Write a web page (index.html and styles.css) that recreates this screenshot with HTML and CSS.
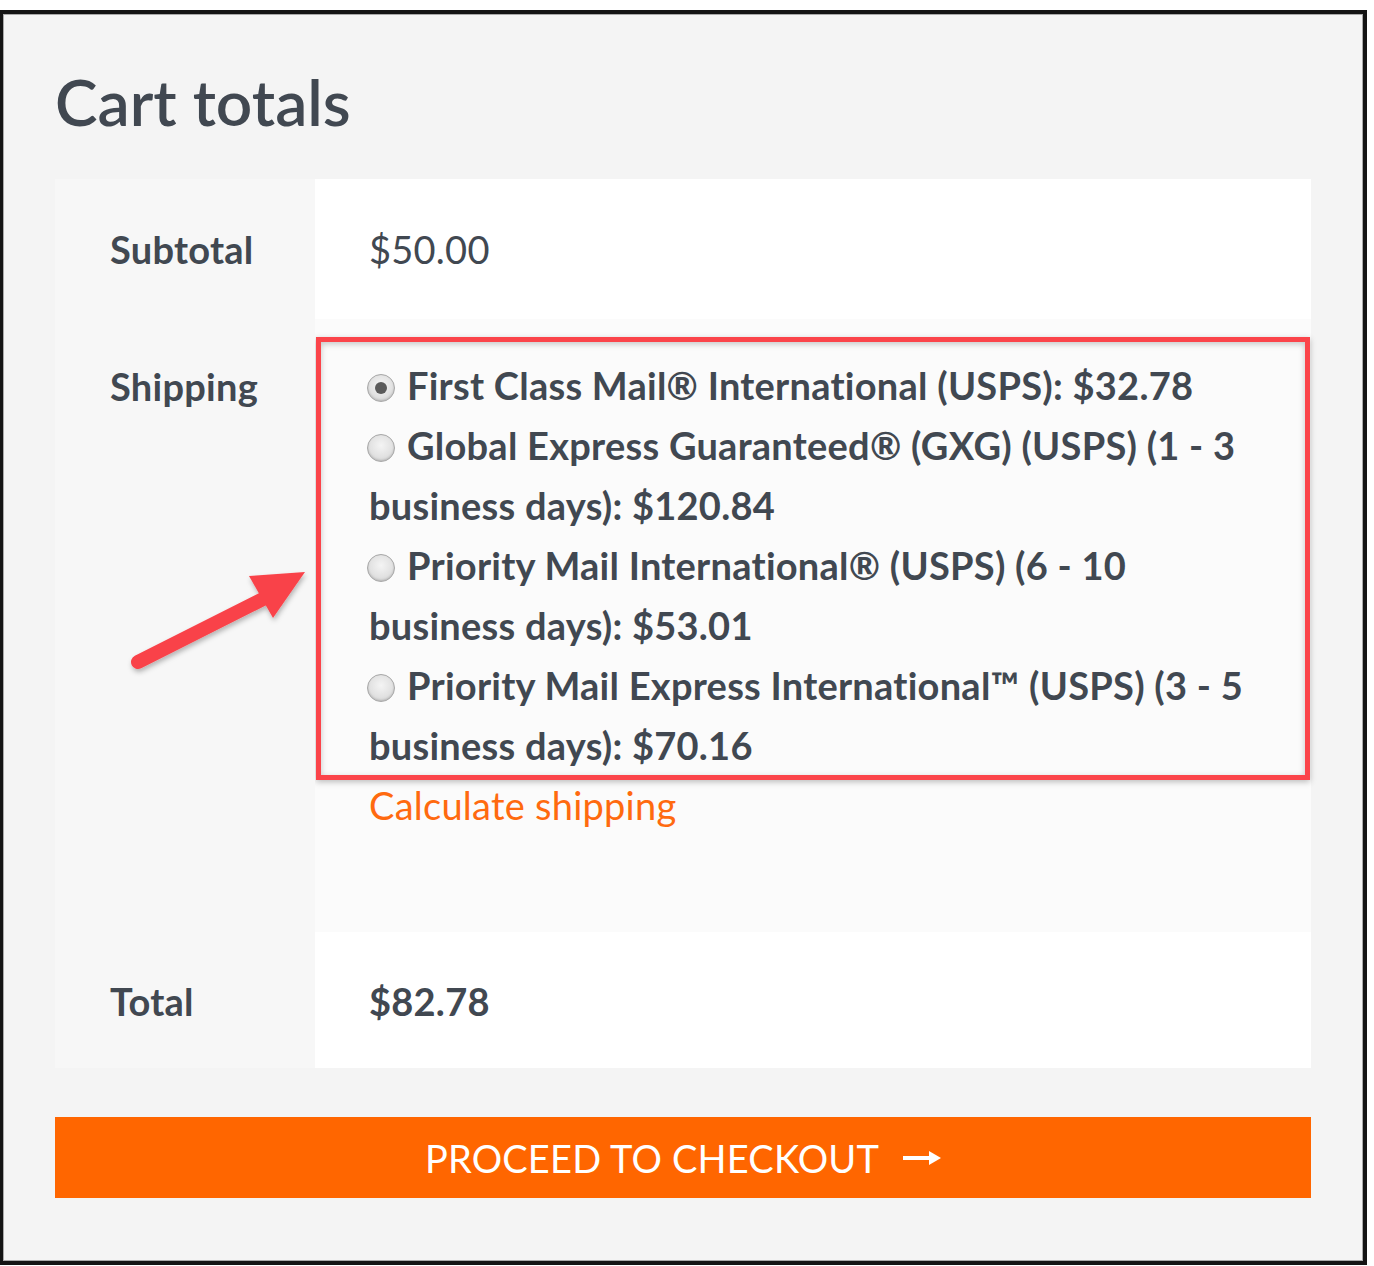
FILE: index.html
```html
<!DOCTYPE html>
<html lang="en">
<head>
<meta charset="utf-8">
<title>Cart totals</title>
<link rel="stylesheet" href="styles.css">
</head>
<body>
<div class="frame">
  <h2 class="title">Cart totals</h2>
  <table class="totals">
    <tr class="row-subtotal">
      <th>Subtotal</th>
      <td class="amount">$50.00</td>
    </tr>
    <tr class="row-shipping">
      <th>
        <span class="label">Shipping</span>
        <svg class="callout-arrow" viewBox="0 0 260 614" width="260" height="614" aria-hidden="true">
          <defs>
            <filter id="ash" x="-20%" y="-20%" width="140%" height="140%">
              <feDropShadow dx="1" dy="3" stdDeviation="2.5" flood-color="#000" flood-opacity="0.28"/>
            </filter>
          </defs>
          <g filter="url(#ash)">
            <line x1="83" y1="343" x2="212" y2="278" stroke="#f9434a" stroke-width="14" stroke-linecap="round"/>
            <polygon points="194,257 250,253 218,299" fill="#f9434a"/>
          </g>
        </svg>
      </th>
      <td class="shipping-cell">
        <ul class="methods">
          <li><span class="radio checked"></span>First Class Mail® International (USPS): $32.78</li>
          <li><span class="radio"></span>Global Express Guaranteed® (GXG) (USPS) (1 - 3 business days): $120.84</li>
          <li><span class="radio"></span>Priority Mail International® (USPS) (6 - 10 business days): $53.01</li>
          <li><span class="radio"></span>Priority Mail Express International™ (USPS) (3 - 5 business days): $70.16</li>
        </ul>
        <p class="calc"><a href="#">Calculate shipping</a></p>
      </td>
    </tr>
    <tr class="row-total">
      <th>Total</th>
      <td class="amount strong">$82.78</td>
    </tr>
  </table>
  <a class="checkout" href="#">PROCEED TO CHECKOUT <svg class="btn-arrow" viewBox="0 0 38 16" width="38" height="16" aria-hidden="true"><rect x="0" y="6" width="28" height="4" fill="#fff"/><polygon points="26,1 38,8 26,15" fill="#fff"/></svg></a>
</div>
</body>
</html>
```

FILE: styles.css
```css
* { box-sizing: border-box; }

html, body {
  margin: 0;
  padding: 0;
  background: #ffffff;
}

body {
  font-family: "Lato", "Open Sans", sans-serif;
  color: #414851;
  padding-top: 10px;
}

.frame {
  width: 1367px;
  height: 1255px;
  border: 4px solid #141414;
  border-left-width: 3px;
  background: #f4f4f4;
  box-shadow: inset 0 0 0 1px #a9a9a9;
  padding: 50px 52px 0 52px;
}

.title {
  margin: 0 0 40px 0;
  font-size: 64px;
  line-height: 75px;
  font-weight: 600;
  color: #414851;
}

.totals {
  width: 1256px;
  border-collapse: collapse;
  border-spacing: 0;
  table-layout: fixed;
  letter-spacing: 0.25px;
}

.totals th {
  width: 260px;
  background: #f7f7f7;
  text-align: left;
  vertical-align: top;
  font-weight: 700;
  font-size: 38px;
  line-height: 36px;
  padding: 52px 0 52px 55px;
  color: #414851;
}

.totals td {
  background: #ffffff;
  font-size: 38px;
  line-height: 36px;
  vertical-align: top;
  padding: 52px 0 52px 54px;
}

.totals td.strong { font-weight: 700; }

.row-total th,
.row-total td {
  padding-top: 51px;
  padding-bottom: 49px;
}

.row-shipping th {
  position: relative;
  padding-top: 49px;
  padding-bottom: 0;
}

.callout-arrow {
  position: absolute;
  left: 0;
  top: 0;
  overflow: visible;
}

.totals td.shipping-cell {
  background: #fbfbfb;
  padding: 18px 1px 109px 1px;
}

.methods {
  list-style: none;
  margin: 0;
  padding: 13px 42px 0 48px;
  border: 5px solid #fb444a;
  box-shadow: 0 2px 6px rgba(0, 0, 0, 0.25), inset 0 2px 6px rgba(0, 0, 0, 0.22);
}

.methods li {
  font-weight: 700;
  font-size: 38px;
  line-height: 60px;
  color: #414851;
}

.radio {
  display: inline-block;
  width: 28px;
  height: 28px;
  border-radius: 50%;
  border: 1px solid #a8a8a8;
  background: radial-gradient(circle at 50% 40%, #f4f4f4 0%, #e2e2e2 55%, #c9c9c9 100%);
  box-shadow: inset 0 -1px 2px rgba(0, 0, 0, 0.15);
  margin: 0 12px 0 -2px;
  vertical-align: -2px;
  position: relative;
}

.radio.checked::after {
  content: "";
  position: absolute;
  left: 7px;
  top: 7px;
  width: 12px;
  height: 12px;
  border-radius: 50%;
  background: #5a5a5a;
}

.calc {
  margin: 7px 0 0 53px;
  font-size: 38px;
  line-height: 36px;
}

.calc a {
  color: #ff6a0f;
  text-decoration: none;
}

.checkout {
  display: flex;
  align-items: center;
  justify-content: center;
  gap: 24px;
  margin-top: 49px;
  width: 1256px;
  height: 81px;
  background: #ff6600;
  color: #ffffff;
  text-decoration: none;
  font-size: 38px;
  font-weight: 400;
  letter-spacing: 0.2px;
}

.btn-arrow { display: block; }
```
